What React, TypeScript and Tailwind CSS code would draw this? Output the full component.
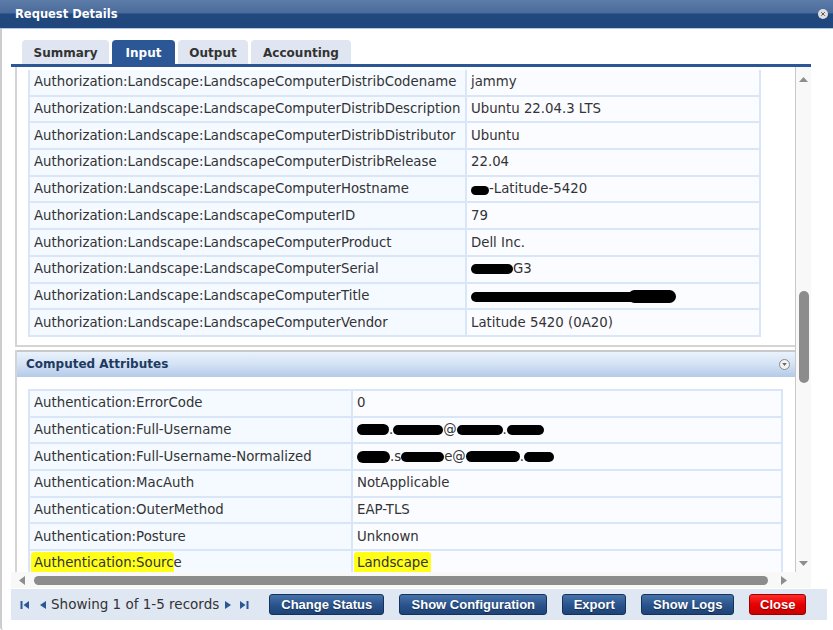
import React from "react";

type Cell = React.ReactNode;

// black marker blobs used for redacted values
function Blob({ w, h = 10, className = "" }: { w: number; h?: number; className?: string }) {
  return (
    <span
      className={`inline-block bg-black rounded-full align-middle ${className}`}
      style={{ width: w, height: h }}
    />
  );
}

const inputRows: [string, Cell][] = [
  ["Authorization:Landscape:LandscapeComputerDistribCodename", "jammy"],
  ["Authorization:Landscape:LandscapeComputerDistribDescription", "Ubuntu 22.04.3 LTS"],
  ["Authorization:Landscape:LandscapeComputerDistribDistributor", "Ubuntu"],
  ["Authorization:Landscape:LandscapeComputerDistribRelease", "22.04"],
  [
    "Authorization:Landscape:LandscapeComputerHostname",
    <>
      <Blob w={18} h={9} className="mt-[2px]" />
      -Latitude-5420
    </>,
  ],
  ["Authorization:Landscape:LandscapeComputerID", "79"],
  ["Authorization:Landscape:LandscapeComputerProduct", "Dell Inc."],
  [
    "Authorization:Landscape:LandscapeComputerSerial",
    <>
      <Blob w={42} h={10} />
      G3
    </>,
  ],
  [
    "Authorization:Landscape:LandscapeComputerTitle",
    <>
      <Blob w={165} h={10} className="mt-[3px]" />
      <Blob w={48} h={13} className="-ml-[8px] mt-[1px]" />
    </>,
  ],
  ["Authorization:Landscape:LandscapeComputerVendor", "Latitude 5420 (0A20)"],
];

const computedRows: [Cell, Cell][] = [
  ["Authentication:ErrorCode", "0"],
  [
    "Authentication:Full-Username",
    <>
      <Blob w={32} h={11} />
      .
      <Blob w={50} h={10} />
      @
      <Blob w={46} h={10} />
      .
      <Blob w={37} h={10} />
    </>,
  ],
  [
    "Authentication:Full-Username-Normalized",
    <>
      <Blob w={33} h={12} />
      .s
      <Blob w={43} h={10} />
      e@
      <Blob w={54} h={11} />
      .
      <Blob w={30} h={10} />
    </>,
  ],
  ["Authentication:MacAuth", "NotApplicable"],
  ["Authentication:OuterMethod", "EAP-TLS"],
  ["Authentication:Posture", "Unknown"],
  [
    <>
      <span className="bg-[#ffff1a] rounded-[3px] -ml-[3px] pl-[3px] py-[1px]">Authentication:Sourc</span>e
    </>,
    <span className="bg-[#ffff1a] rounded-[3px] -ml-[3px] px-[3px] py-[1px]">Landscape</span>,
  ],
];

function AttrTable({
  rows,
  w1,
  w2,
  top = true,
}: {
  rows: [Cell, Cell][];
  w1: string;
  w2: string;
  top?: boolean;
}) {
  return (
    <div className={`border-l-2 border-[#d9e6f8] ${top ? "border-t-2" : ""}`}>
      {rows.map(([k, v], i) => (
        <div key={i} className="flex h-[26.7px] border-b-2 border-[#d9e6f8]">
          <div className={`${w1} shrink-0 border-r-2 border-[#d9e6f8] bg-[#f4faff] pl-[4px] flex items-center whitespace-nowrap overflow-hidden`}>
            {k}
          </div>
          <div className={`${w2} shrink-0 border-r-2 border-[#d9e6f8] bg-[#fbfcff] pl-[4px] flex items-center whitespace-nowrap overflow-hidden`}>
            {v}
          </div>
        </div>
      ))}
    </div>
  );
}

function Tri({ dir, className = "" }: { dir: "up" | "down" | "left" | "right"; className?: string }) {
  const pts = {
    up: "0,5 4.5,0 9,5",
    down: "0,0 9,0 4.5,5",
    left: "6,0 6,9 0,4.5",
    right: "0,0 0,9 6,4.5",
  }[dir];
  const vb = dir === "up" || dir === "down" ? "0 0 9 5" : "0 0 6 9";
  const size = dir === "up" || dir === "down" ? "w-[9px] h-[5px]" : "w-[6px] h-[9px]";
  return (
    <svg viewBox={vb} className={`${size} ${className}`}>
      <polygon points={pts} fill="currentColor" />
    </svg>
  );
}

function PageIcon({ kind }: { kind: "first" | "prev" | "next" | "last" }) {
  return (
    <svg viewBox="0 0 10 10" className="w-[10px] h-[10px] text-[#2b5797]">
      {kind === "first" && (
        <>
          <rect x="0.5" y="1" width="2" height="8" fill="currentColor" />
          <polygon points="9,1 9,9 3.5,5" fill="currentColor" />
        </>
      )}
      {kind === "prev" && <polygon points="8,1 8,9 2,5" fill="currentColor" />}
      {kind === "next" && <polygon points="2,1 2,9 8,5" fill="currentColor" />}
      {kind === "last" && (
        <>
          <polygon points="1,1 1,9 6.5,5" fill="currentColor" />
          <rect x="7.5" y="1" width="2" height="8" fill="currentColor" />
        </>
      )}
    </svg>
  );
}

function Btn({ label, w, red = false }: { label: string; w: string; red?: boolean }) {
  return (
    <button
      className={`${w} h-[21px] rounded-[3px] border text-white font-bold text-[13px] font-['Liberation_Sans',Arial,sans-serif] [text-shadow:0_1px_1px_rgba(0,0,0,0.4)] ${
        red
          ? "border-[#9e0000] bg-[linear-gradient(to_bottom,#ff2b2b_0%,#e60000_50%,#cc0000_100%)]"
          : "border-[#15325b] bg-[linear-gradient(to_bottom,#4672aa_0%,#2c558e_50%,#1d4377_100%)]"
      }`}
    >
      {label}
    </button>
  );
}

export default function App() {
  const tabs = [
    { name: "Summary", w: "w-[87px]" },
    { name: "Input", w: "w-[63px]", active: true },
    { name: "Output", w: "w-[70px]" },
    { name: "Accounting", w: "w-[100px]" },
  ];

  return (
    <div className="w-[833px] h-[630px] bg-white flex flex-col overflow-hidden font-['DejaVu_Sans',Verdana,sans-serif] text-[#333]">
      {/* title bar */}
      <div className="h-[29px] shrink-0 border-b border-[#b3c6e2] bg-[linear-gradient(to_bottom,#5c7ba7_0%,#4a6b9c_46%,#21497e_50%,#1f477d_100%)] flex items-center justify-between pl-[15px] pr-[5px]">
        <span className="text-white font-bold text-[11.5px] pt-[2px]">Request Details</span>
        <span className="w-[10px] h-[10px] rounded-full bg-[#dedede] flex items-center justify-center">
          <svg viewBox="0 0 10 10" className="w-[6px] h-[6px]">
            <path d="M2 2 L8 8 M8 2 L2 8" stroke="#555" strokeWidth="1.6" />
          </svg>
        </span>
      </div>

      <div className="flex-1 border-l-2 border-[#cdcdcd] rounded-bl-[3px] pl-[9px]">
        {/* tabs */}
        <div className="mt-[11px] pl-[11px] flex gap-[3px] h-[24px]">
          {tabs.map((t) => (
            <div
              key={t.name}
              className={`${t.w} rounded-t-[4px] flex items-center justify-center font-bold text-[12px] pt-[1px] ${
                t.active ? "bg-[#2b5797] text-white" : "bg-[#dfe6f1] text-[#333]"
              }`}
            >
              {t.name}
            </div>
          ))}
        </div>
        <div className="w-[800px] h-[3px] bg-[#2b5797]" />

        {/* scrolling body */}
        <div className="w-[800px] h-[505px] flex text-[13.3px]">
          <div className="w-[784px] overflow-hidden pl-[4px]">
            <div className="border-l-2 border-b-2 border-[#d4d4d4] pl-[11px] pt-[3px] pb-[8px]">
              <div className="w-[733px]">
                <AttrTable rows={inputRows} w1="w-[437px]" w2="w-[294px]" top={false} />
              </div>
            </div>

            <div className="mt-[3px] border-l-2 border-[#d4d4d4]">
              <div className="h-[27px] border-t-2 border-[#c9c9c9] bg-[linear-gradient(to_bottom,#eaf2fc_0%,#d3e2f5_50%,#b3cae7_100%)] flex items-center justify-between pl-[9px] pr-[5px]">
                <span className="font-bold text-[12px] text-[#1e3a60]">Computed Attributes</span>
                <span className="w-[11px] h-[11px] rounded-full border border-[#8a8a8a] bg-[#f3f3f3] flex items-center justify-center">
                  <svg viewBox="0 0 6 4" className="w-[5px] h-[3px]">
                    <polygon points="0,0 6,0 3,4" fill="#666" />
                  </svg>
                </span>
              </div>
              <div className="pt-[12px] pl-[11px]">
                <div className="w-[755px]">
                  <AttrTable rows={computedRows} w1="w-[323px]" w2="w-[430px]" />
                </div>
              </div>
            </div>
          </div>

          {/* vertical scrollbar */}
          <div className="w-[16px] border-l border-[#c8c8c8] bg-[#f8f8f8] flex flex-col items-center text-[#8d8d8d]">
            <Tri dir="up" className="mt-[10px]" />
            <div className="mt-[209px] w-[10px] h-[92px] rounded-full bg-[#8c8c8c]" />
            <div className="flex-1" />
            <Tri dir="down" className="mb-[6px]" />
          </div>
        </div>

        {/* horizontal scrollbar */}
        <div className="w-[800px] h-[16px] flex">
          <div className="w-[784px] bg-[#f8f8f8] flex items-center pl-[8px] text-[#8d8d8d]">
            <Tri dir="left" />
            <div className="ml-[9px] w-[734px] h-[9px] rounded-full bg-[#8c8c8c]" />
            <Tri dir="right" className="ml-[13px]" />
          </div>
          <div className="w-[16px] bg-[#f8f8f8]" />
        </div>

        {/* footer */}
        <div className="mt-[1px] w-[816px] h-[31px] bg-[#dfe7f3] flex items-center pl-[9px]">
          <PageIcon kind="first" />
          <span className="ml-[8px]">
            <PageIcon kind="prev" />
          </span>
          <span className="ml-[3px] text-[13.5px] text-[#333]">Showing 1 of 1-5 records</span>
          <span className="ml-[4px]">
            <PageIcon kind="next" />
          </span>
          <span className="ml-[6px]">
            <PageIcon kind="last" />
          </span>
          <div className="ml-[20px] flex gap-[15px]">
            <Btn label="Change Status" w="w-[115px]" />
            <Btn label="Show Configuration" w="w-[148px]" />
            <Btn label="Export" w="w-[64px]" />
            <Btn label="Show Logs" w="w-[93px]" />
            <Btn label="Close" w="w-[57px]" red />
          </div>
        </div>
      </div>
    </div>
  );
}
